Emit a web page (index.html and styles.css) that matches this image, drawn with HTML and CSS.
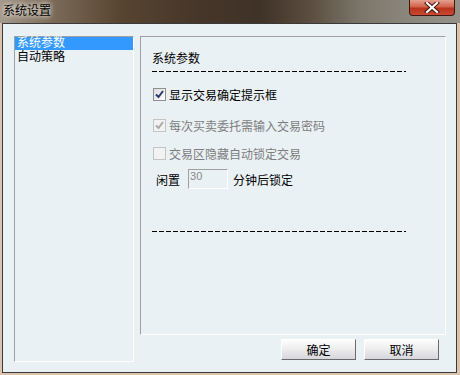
FILE: index.html
```html
<!DOCTYPE html>
<html lang="zh-CN">
<head>
    <meta charset="UTF-8">
    <title>系统设置</title>
    <link rel="stylesheet" href="styles.css">
</head>
<body>

    <div class="window">
        <div class="titlebar">
            <span class="title">系统设置</span>
            <span class="close">
                <svg width="16" height="11" viewBox="0 0 16 11">
                    <path d="M3 1 L13 10 M13 1 L3 10" stroke="#3a1208" stroke-width="4" stroke-linecap="square"/>
                    <path d="M3 1 L13 10 M13 1 L3 10" stroke="#ffffff" stroke-width="2.2" stroke-linecap="square"/>
                </svg>
            </span>
        </div>

        <div class="client">
            <!-- left navigation list -->
            <ul class="nav-list">
                <li class="selected">系统参数</li>
                <li>自动策略</li>
            </ul>

            <div class="main">
                <div class="panel">
                    <div class="section-title">系统参数</div>
                    <div class="rule"></div>

                    <label class="check-row row-1">
                        <span class="box">
                            <svg width="11" height="11" viewBox="0 0 11 11"><path d="M2 5.5 L4.5 8 L9 2" fill="none" stroke="#2a3a6a" stroke-width="2"/></svg>
                        </span>
                        显示交易确定提示框
                    </label>

                    <label class="check-row row-2 disabled">
                        <span class="box">
                            <svg width="11" height="11" viewBox="0 0 11 11"><path d="M2 5.5 L4.5 8 L9 2" fill="none" stroke="#a8a8a8" stroke-width="2"/></svg>
                        </span>
                        每次买卖委托需输入交易密码
                    </label>

                    <label class="check-row row-3 disabled">
                        <span class="box"></span>
                        交易区隐藏自动锁定交易
                    </label>

                    <div class="idle-row">
                        <span class="idle-label">闲置</span>
                        <span class="idle-input">30</span>
                        <span class="idle-unit">分钟后锁定</span>
                    </div>

                    <div class="rule rule-bottom"></div>
                </div>

                <div class="buttons">
                    <button class="btn">确定</button>
                    <button class="btn">取消</button>
                </div>
            </div>
        </div>
    </div>

</body>
</html>
```

FILE: styles.css
```css
* {
    box-sizing: border-box;
}
body {
    margin: 0;
    width: 460px;
    height: 375px;
    overflow: hidden;
    background-color: #dcc3ad;
    font-family: "Noto Sans CJK SC", sans-serif;
    font-size: 12px;
    color: #000;
}
.window {
    width: 460px;
    height: 375px;
}
.titlebar {
    height: 23px;
    display: flex;
    align-items: flex-start;
    background: linear-gradient(90deg, #a49a8c 0px, #7d6c5a 50px, #574531 120px, #46362a 200px, #3f3226 260px, #5b4d40 310px, #7c766a 360px, #8c877d 410px, #979289 460px);
}
.title {
    margin: 3px 0 0 3px;
    line-height: 14px;
    color: #000;
    text-shadow: 0 0 4px #f2eee8, 0 0 6px #e8e2d8;
}
.close {
    margin-left: auto;
    margin-right: 5px;
    width: 46px;
    height: 16px;
    display: flex;
    align-items: center;
    justify-content: center;
    border: 1px solid #3a1a12;
    border-top: none;
    border-radius: 0 0 4px 4px;
    background: linear-gradient(180deg, #e3a090 0%, #d2634a 45%, #b8321c 55%, #c94a30 100%);
}
.client {
    margin-left: 2px;
    width: 455px;
    height: 350px;
    border: 1px solid #3a3a3a;
    background-color: #eaf1f4;
    padding: 12px 9px 0 11px;
    display: flex;
    align-items: flex-start;
}
.nav-list {
    list-style: none;
    margin: 0;
    padding: 0;
    width: 120px;
    height: 326px;
    border-top: 1px solid #a0a0a0;
    border-left: 1px solid #a0a0a0;
    border-right: 1px solid #ffffff;
    border-bottom: 1px solid #ffffff;
    font-family: "Liberation Sans", "Noto Sans CJK SC", sans-serif;
}
.nav-list li {
    height: 14px;
    line-height: 14px;
    padding-left: 2px;
    white-space: nowrap;
}
.nav-list li.selected {
    height: 13px;
    line-height: 13px;
    background-color: #3399ff;
    color: #fff;
}
.main {
    margin-left: 6px;
    width: 306px;
}
.panel {
    height: 299px;
    border-top: 1px solid #a0a0a0;
    border-left: 1px solid #a0a0a0;
    border-right: 1px solid #ffffff;
    border-bottom: 1px solid #ffffff;
    padding: 0 11px;
}
.section-title {
    margin-top: 14px;
    line-height: 14px;
}
.rule {
    margin-top: 6px;
    width: 254px;
    height: 1px;
    background: repeating-linear-gradient(90deg, #000 0px, #000 5px, transparent 5px, transparent 7px);
}
.rule-bottom {
    margin-top: 42px;
}
.check-row {
    display: flex;
    align-items: center;
    height: 13px;
    line-height: 13px;
    white-space: nowrap;
}
.row-1 {
    margin-top: 16px;
}
.row-2 {
    margin-top: 18px;
}
.row-3 {
    margin-top: 15px;
}
.box {
    width: 13px;
    height: 13px;
    margin: 0 3px 0 1px;
    border: 1px solid #8e8f8f;
    background: linear-gradient(135deg, #dcdcdc, #ffffff);
    display: flex;
    align-items: center;
    justify-content: center;
}
.disabled {
    color: #7d7d7d;
}
.disabled .box {
    border-color: #c4c4c4;
    background: #f2f2f2;
}
.idle-row {
    margin-top: 9px;
    display: flex;
    align-items: center;
    height: 20px;
}
.idle-label {
    margin-left: 4px;
}
.idle-input {
    margin-left: 8px;
    width: 40px;
    height: 20px;
    border-top: 1px solid #a0a0a0;
    border-left: 1px solid #a0a0a0;
    border-right: 1px solid #ffffff;
    border-bottom: 1px solid #ffffff;
    color: #8a8a8a;
    font-family: "Liberation Sans", sans-serif;
    font-size: 11px;
    line-height: 12px;
    padding-left: 1px;
}
.idle-unit {
    margin-left: 5px;
}
.buttons {
    margin-top: 4px;
    padding-right: 7px;
    display: flex;
    justify-content: flex-end;
    gap: 8px;
}
.btn {
    width: 75px;
    height: 21px;
    padding: 0;
    font-family: "Noto Sans CJK SC", sans-serif;
    font-size: 12px;
    color: #000;
    border-top: 1px solid #ffffff;
    border-left: 1px solid #ffffff;
    border-right: 1px solid #6a6a6a;
    border-bottom: 1px solid #6a6a6a;
    background: linear-gradient(180deg, #fdfdfd 0%, #eeeeef 45%, #d6d6dc 100%);
}
```
